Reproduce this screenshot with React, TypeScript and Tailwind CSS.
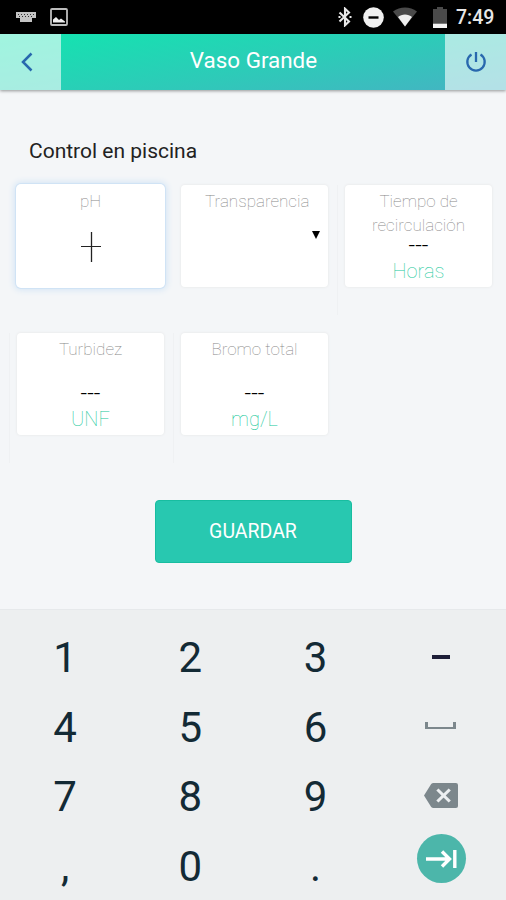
import type { ReactNode } from 'react';
import clsx from 'clsx';

interface FieldCardProps {
  label: string;
  unit?: string;
  focused?: boolean;
  divided?: boolean;
  children?: ReactNode;
}

function StatusBar() {
  return (
    <div className="flex h-[34px] shrink-0 items-center bg-black text-[#e8e8e8]">
      <svg className="ml-4 h-[12px] w-[20px]" viewBox="0 0 20 12" fill="currentColor">
        <path d="M0 1h20v6h-4v4H4V7H0z" fill="#c4c4c4" />
        <path d="M2 3h1v1H2zM5 3h1v1H5zM8 3h1v1H8zM11 3h1v1h-1zM14 3h1v1h-1zM17 3h1v1h-1zM3 5h1v1H3zM6 5h1v1H6zM9 5h1v1H9zM12 5h1v1h-1zM15 5h1v1h-1z" fill="#333" />
      </svg>
      <svg className="ml-[14px] h-[18px] w-[18px]" viewBox="0 0 18 18">
        <rect x="1" y="1" width="16" height="16" rx="1" fill="none" stroke="#bdbdbd" strokeWidth="1.8" />
        <path d="M3 14.500v-3l3-2.500 3 3 2-1.500 4 3v1z" fill="#eee" />
      </svg>
      <svg className="ml-auto h-[20px] w-[14px]" viewBox="0 0 14 20" fill="none" stroke="currentColor" strokeWidth="2.1">
        <path d="M1.500 5.500 11 14.500 7 18.300V1.700L11 5.500 1.500 14.500" />
        <path d="M.5 10h2M11.500 10h2" />
      </svg>
      <svg className="ml-[11px] h-[21px] w-[21px]" viewBox="0 0 21 21">
        <circle cx="10.500" cy="10.500" r="10.300" fill="#f0f0f0" />
        <path d="M5.500 10.500h10" stroke="#000" strokeWidth="2.400" />
      </svg>
      <svg className="ml-[9px] h-[20px] w-[24px]" viewBox="0 0 24 20">
        <path d="M0 4.500C7-1 17-1 24 4.500L12 19.500z" fill="#4a4a4a" />
        <path d="M5 10C8.500 6.500 15.500 6.500 19 10L12 19.500z" fill="#f0f0f0" />
      </svg>
      <svg className="ml-[16px] h-[22px] w-[14px]" viewBox="0 0 14 22">
        <path d="M0 3h4V1h6v2h4v14H0z" fill="#4a4a4a" />
        <path d="M0 17.500h14V22H0z" fill="#f5f5f5" />
      </svg>
      <span className="mr-[11px] ml-[9px] w-[39px] pt-[2px] text-[19.500px] font-medium whitespace-nowrap">7:49</span>
    </div>
  );
}

function Header() {
  return (
    <header className="flex h-[56px] shrink-0 bg-linear-[170deg,#14e3b0_5%,#2dcbb8_55%,#43b5c2_95%] shadow-[0_1px_3px_rgba(0,0,0,0.4)]">
      <button className="flex w-[61px] items-center justify-center bg-white/60 pr-[7px]">
        <svg className="h-[20px] w-[12px]" viewBox="0 0 12 20" fill="none" stroke="#2868ae" strokeWidth="2.5">
          <path d="M10.500 1.500 2 10l8.500 8.500" />
        </svg>
      </button>
      <h1 className="flex-1 pt-[9px] pl-px text-center text-[22.400px] leading-[34px] text-white">Vaso Grande</h1>
      <button className="flex w-[61px] items-center justify-center bg-white/60">
        <svg className="h-[22px] w-[22px]" viewBox="0 0 22 22" fill="none" stroke="#2868ae" strokeWidth="2.3">
          <path d="M11 1v10M6.500 3.500a8.700 8.700 0 1 0 9 0" />
        </svg>
      </button>
    </header>
  );
}

function FieldCard({ label, unit, focused, divided, children }: FieldCardProps) {
  return (
    <div className={clsx('h-[130px] border-l pl-[7px]', divided ? 'border-[#eff1f3]' : 'border-transparent')}>
      <div
        className={clsx(
          'h-[102px] w-[147px] rounded-[4px] bg-white pt-[4px] text-center',
          focused ? 'shadow-[0_0_0_1px_#fff,0_0_0_2px_#d0e3f5,0_0_6px_3px_#d3e4f5]' : 'shadow-[0_0_2px_1px_#eceeef]',
        )}
      >
        <div className="h-[48px] px-6 text-[17px] leading-6 font-thin text-[#888]">{label}</div>
        <div className="mt-[2px] flex h-[14px] items-center justify-center text-[23px] leading-[14px] font-light text-black">
          {children}
        </div>
        <div className="mt-[6px] text-[20px] leading-6 font-thin text-[#20c99b]">{unit}</div>
      </div>
    </div>
  );
}

const EMPTY = '---';

const KEYS: { id: string; content: ReactNode }[] = [
  { id: '1', content: '1' },
  { id: '2', content: '2' },
  { id: '3', content: '3' },
  { id: 'minus', content: <span className="mb-[2px] h-[4px] w-[18px] bg-[#1e1f38]" /> },
  { id: '4', content: '4' },
  { id: '5', content: '5' },
  { id: '6', content: '6' },
  { id: 'space', content: <span className="mb-[4px] h-[7px] w-[31px] border-x-[3px] border-b-2 border-[#7c878c]" /> },
  { id: '7', content: '7' },
  { id: '8', content: '8' },
  { id: '9', content: '9' },
  {
    id: 'backspace',
    content: (
      <svg className="mb-[4px] ml-px h-[25px] w-[34px]" viewBox="0 0 33 25" preserveAspectRatio="none">
        <path d="M9 0h22q2 0 2 2v21q0 2-2 2H9q-1 0-2-1L0 12.500 7 1q1-1 2-1z" fill="#7c878c" />
        <path d="m13 6.500 12 12m0-12-12 12" stroke="#eceff1" strokeWidth="3" />
      </svg>
    ),
  },
  { id: ',', content: ',' },
  { id: '0', content: '0' },
  { id: '.', content: '.' },
  {
    id: 'next',
    content: (
      <span className="mb-[16px] ml-px flex h-[49px] w-[49px] items-center justify-center rounded-full bg-[#4cb6aa]">
        <svg className="h-[18px] w-[31px]" viewBox="0 0 31 18" fill="none" stroke="#fff" strokeWidth="3.400">
          <path d="M0 9h24M16 1.500 23.500 9 16 16.500M28.800 0v18" />
        </svg>
      </span>
    ),
  },
];

function Keypad() {
  return (
    <div className="h-[291px] shrink-0 overflow-hidden border-t border-[#e6e9eb] bg-[#edeff0] px-[2.500px] pt-[13px]">
      <div className="grid auto-rows-[69.700px] grid-cols-4">
        {KEYS.map((key) => (
          <button key={key.id} className="flex items-center justify-center text-[42px] leading-none text-[#132a35]">
            {key.content}
          </button>
        ))}
      </div>
    </div>
  );
}

export default function App() {
  return (
    <div className="flex h-[900px] w-[506px] flex-col overflow-hidden bg-[#f4f6f8] font-['Roboto',sans-serif]">
      <StatusBar />
      <Header />
      <main className="flex-1">
        <h2 className="mt-[46px] ml-[29px] text-[21px] leading-[30px] text-[#222]">Control en piscina</h2>
        <div className="mt-[19px] ml-[9px] grid grid-cols-[164px_164px_164px] gap-y-[18px]">
          <FieldCard label="pH" focused>
            {/* placeholder dashes crossed by the text caret */}
            <svg className="mt-px h-[30px] w-[20px] shrink-0" viewBox="0 0 20 30" stroke="#222">
              <path d="M0 14.500h20" strokeWidth="1" />
              <path d="M10.500 0v30" strokeWidth="1.300" />
            </svg>
          </FieldCard>
          <FieldCard label="Transparencia">
            <svg className="mt-[-22px] ml-[122px] h-[8px] w-[8px]" viewBox="0 0 8 8">
              <path d="M0 0h8L4 8z" fill="#000" />
            </svg>
          </FieldCard>
          <FieldCard label="Tiempo de recirculación" unit="Horas" divided>{EMPTY}</FieldCard>
          <FieldCard label="Turbidez" unit="UNF" divided>{EMPTY}</FieldCard>
          <FieldCard label="Bromo total" unit="mg/L" divided>{EMPTY}</FieldCard>
        </div>
        <button className="mx-auto mt-[37px] block h-[63px] w-[197px] rounded-[4px] border border-[#18bda0] bg-[#28c8b0] text-[19.500px] text-white">
          GUARDAR
        </button>
      </main>
      <Keypad />
    </div>
  );
}
